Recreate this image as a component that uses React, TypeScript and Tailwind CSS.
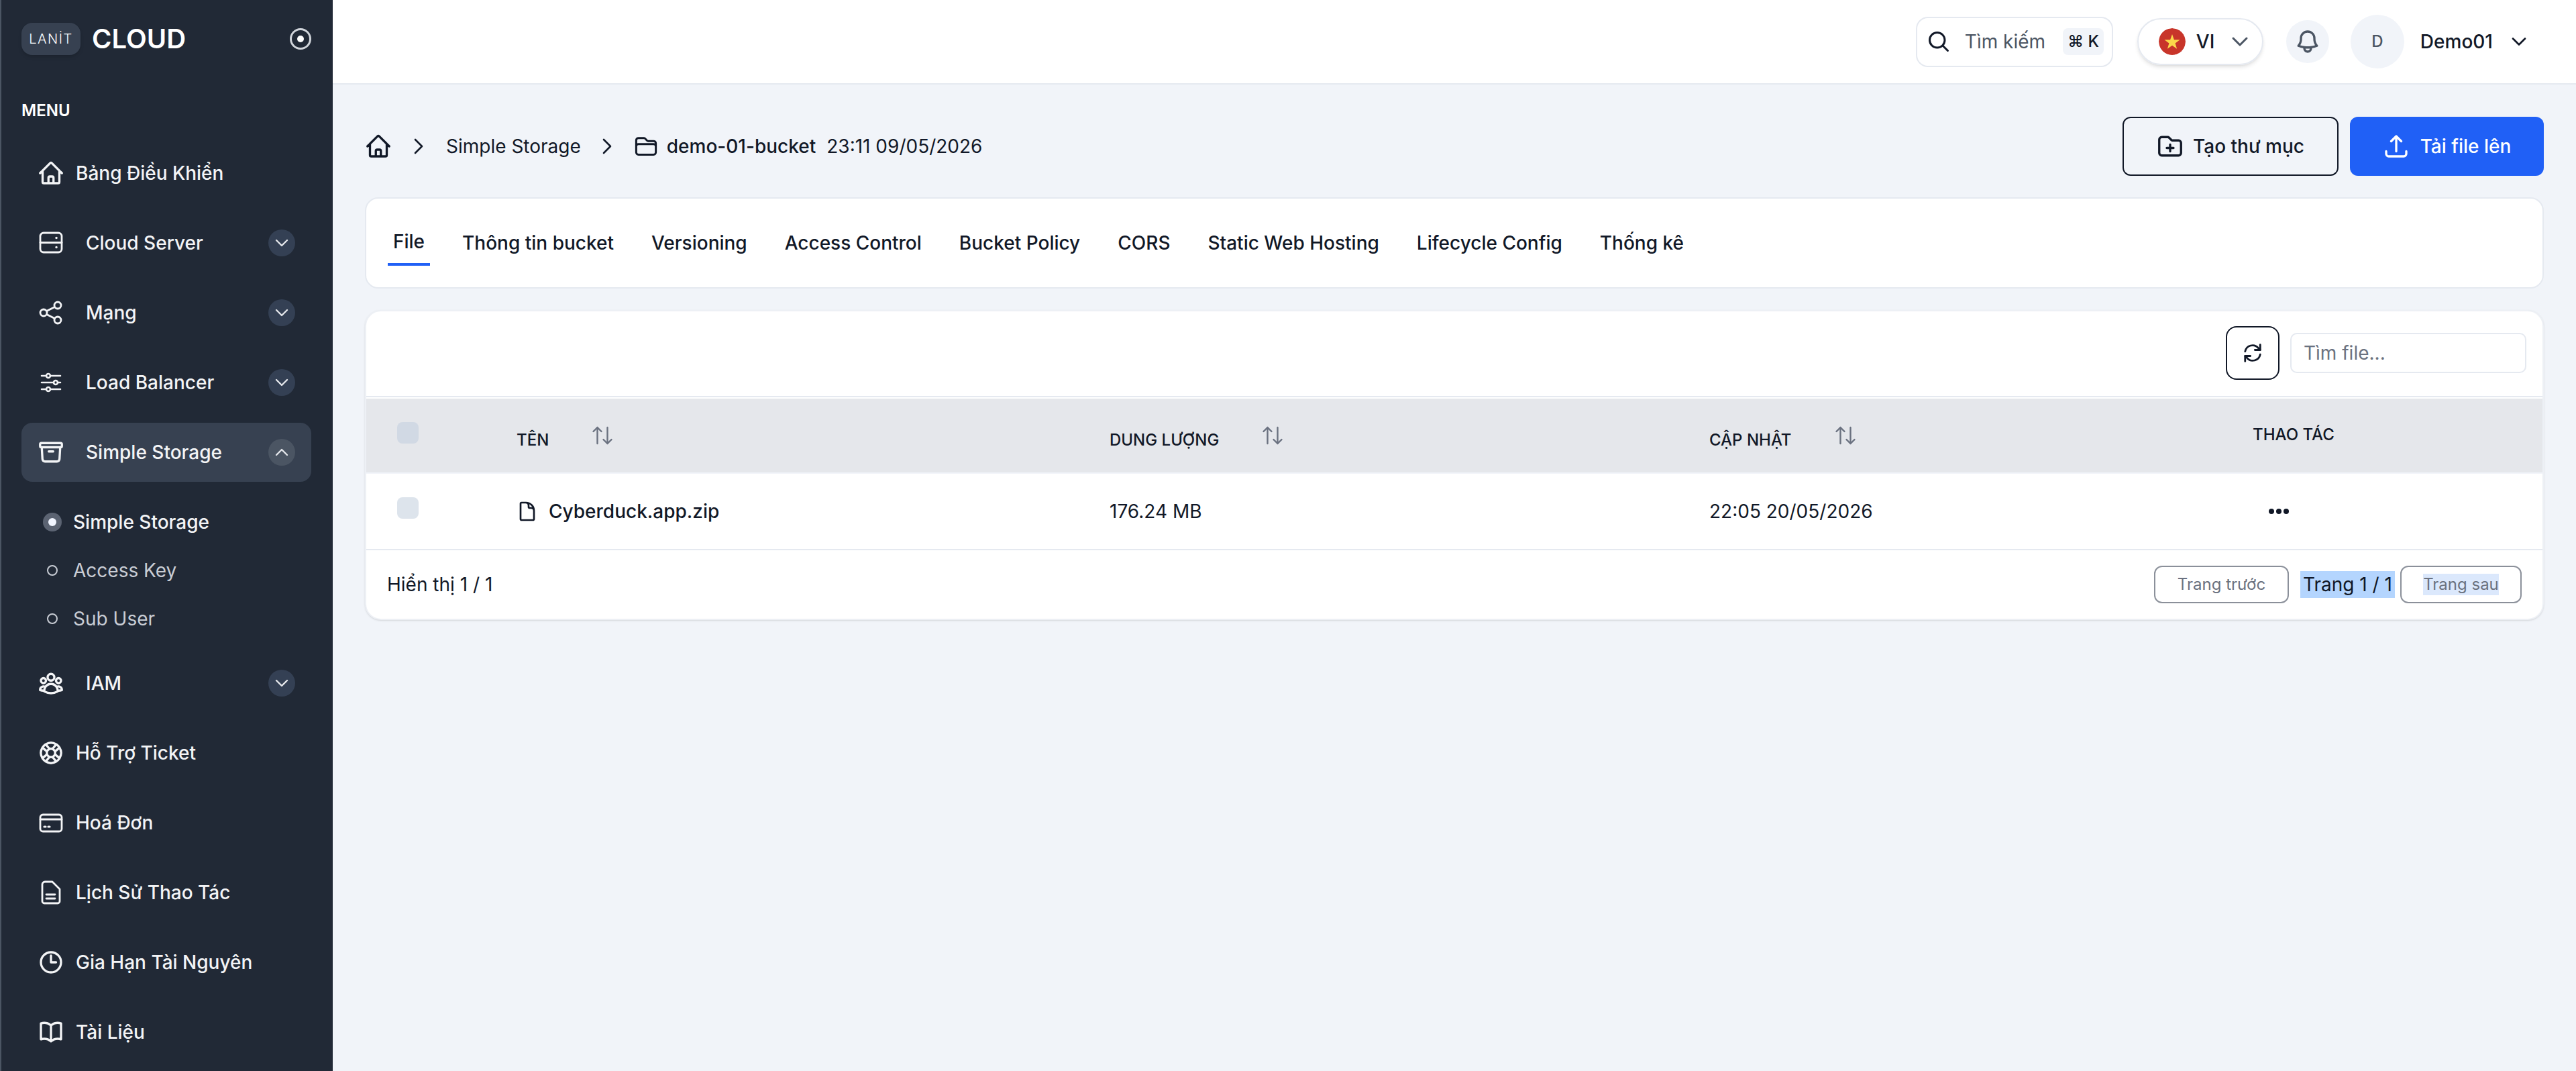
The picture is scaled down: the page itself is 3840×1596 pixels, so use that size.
import type { ReactNode } from 'react'
import { ArrowUpDown, ChevronDown, ChevronUp } from 'lucide-react'
import {
  HiOutlineArchiveBox,
  HiOutlineArrowUpTray,
  HiOutlineBell,
  HiOutlineBookOpen,
  HiOutlineClock,
  HiOutlineDocument,
  HiOutlineFolder,
  HiOutlineFolderPlus,
  HiOutlineHome,
  HiOutlineLifebuoy,
  HiOutlineMagnifyingGlass,
  HiOutlineUserGroup,
} from 'react-icons/hi2'

const iconClass = 'size-10 shrink-0'

function ServerIcon() {
  return (
    <svg viewBox="0 0 40 40" className={iconClass} fill="none" stroke="currentColor" strokeWidth="2.8" strokeLinecap="round">
      <rect x="4" y="5" width="32" height="29" rx="5" />
      <path d="M4 19.5h32" />
      <path d="M28 12.5h.1M28 26.5h.1" strokeWidth="3.4" />
    </svg>
  )
}

function ShareIcon() {
  return (
    <svg viewBox="0 0 40 40" className={iconClass} fill="none" stroke="currentColor" strokeWidth="2.8">
      <circle cx="9" cy="20" r="5" />
      <circle cx="30" cy="9" r="5" />
      <circle cx="30" cy="31" r="5" />
      <path d="M13.5 17.6 25.5 11.4M13.5 22.4 25.5 28.6" />
    </svg>
  )
}

function SlidersIcon() {
  return (
    <svg viewBox="0 0 40 40" className={iconClass} fill="none" stroke="currentColor" strokeWidth="2.6" strokeLinecap="round">
      <path d="M6 10h7M19 10h15M6 20h18M30 20h4M6 30h7M19 30h15" />
      <circle cx="16" cy="10" r="3" />
      <circle cx="27" cy="20" r="3" />
      <circle cx="16" cy="30" r="3" />
    </svg>
  )
}

function BillIcon() {
  return (
    <svg viewBox="0 0 40 40" className={iconClass} fill="none" stroke="currentColor" strokeWidth="2.8" strokeLinecap="round">
      <rect x="4" y="8" width="32" height="25" rx="4" />
      <path d="M4 15h32" />
      <path d="M10 26h2M16 26h2" strokeWidth="3.2" />
    </svg>
  )
}

function DocLinesIcon() {
  return (
    <svg viewBox="0 0 40 40" className={iconClass} fill="none" stroke="currentColor" strokeWidth="2.8" strokeLinecap="round" strokeLinejoin="round">
      <path d="M11 4h11l11 11v18a3 3 0 0 1-3 3H10a3 3 0 0 1-3-3V8a4 4 0 0 1 4-4Z" />
      <path d="M13 23h13M13 29h13" />
    </svg>
  )
}

function RefreshIcon() {
  return (
    <svg viewBox="0 0 32 32" className="size-9" fill="none" stroke="#111827" strokeWidth="2.5" strokeLinecap="round" strokeLinejoin="round">
      <path d="M6 14a10 10 0 0 1 17.5-4.5L26 12" />
      <path d="M26 5v7h-7" />
      <path d="M26 18a10 10 0 0 1-17.5 4.5L6 20" />
      <path d="M6 27v-7h7" />
    </svg>
  )
}

function CrumbChevron() {
  return (
    <svg viewBox="0 0 16 24" className="h-6 w-4 shrink-0" fill="none" stroke="currentColor" strokeWidth="2.6" strokeLinecap="round" strokeLinejoin="round">
      <path d="M3 2l10 10-10 10" />
    </svg>
  )
}

function Flag() {
  return (
    <svg viewBox="0 0 40 40" className="size-10 shrink-0 rounded-full">
      <circle cx="20" cy="20" r="20" fill="#c8352a" />
      <path d="M20 9l2.9 8.2h8.6l-6.9 5.2 2.5 8.4-7.1-5-7.1 5 2.5-8.4-6.9-5.2h8.6z" fill="#fbd84a" />
    </svg>
  )
}

type NavItem = { label: string; icon: ReactNode; expandable?: boolean }

const hi = { className: iconClass, strokeWidth: 2 }

const topItems: NavItem[] = [
  { label: 'Bảng Điều Khiển', icon: <HiOutlineHome {...hi} /> },
  { label: 'Cloud Server', icon: <ServerIcon />, expandable: true },
  { label: 'Mạng', icon: <ShareIcon />, expandable: true },
  { label: 'Load Balancer', icon: <SlidersIcon />, expandable: true },
]

const bottomItems: NavItem[] = [
  { label: 'IAM', icon: <HiOutlineUserGroup {...hi} />, expandable: true },
  { label: 'Hỗ Trợ Ticket', icon: <HiOutlineLifebuoy {...hi} /> },
  { label: 'Hoá Đơn', icon: <BillIcon /> },
  { label: 'Lịch Sử Thao Tác', icon: <DocLinesIcon /> },
  { label: 'Gia Hạn Tài Nguyên', icon: <HiOutlineClock {...hi} /> },
  { label: 'Tài Liệu', icon: <HiOutlineBookOpen {...hi} /> },
]

const tabs = ['Thông tin bucket', 'Versioning', 'Access Control', 'Bucket Policy', 'CORS', 'Static Web Hosting', 'Lifecycle Config', 'Thống kê']

function NavRow({ item }: { item: NavItem }) {
  return (
    <div className={`flex h-[88px] shrink-0 items-center rounded-2xl pl-6 pr-6 text-[#f3f4f6] ${item.expandable ? 'gap-8' : 'gap-[17px]'}`}>
      {item.icon}
      <span className="flex-1 text-[28px] font-medium">{item.label}</span>
      {item.expandable && (
        <span className="flex size-10 items-center justify-center rounded-full bg-[#344054]">
          <ChevronDown className="size-8 text-[#e5e7eb]" strokeWidth={1.8} />
        </span>
      )}
    </div>
  )
}

function Sidebar() {
  return (
    <aside className="flex h-full w-[496px] shrink-0 flex-col overflow-hidden border-l-2 border-[#4b5563] bg-[#212936]">
      <div className="ml-[30px] mr-8 mt-[34px] flex h-12 shrink-0 items-center">
        <div className="flex h-12 w-[88px] items-center justify-center rounded-2xl bg-[#374151] text-[20px] font-light tracking-[1.5px] text-white shadow-md">
          LANİT
        </div>
        <span className="ml-[17px] flex-1 text-[40px] font-semibold leading-none text-white">CLOUD</span>
        <span className="flex size-8 items-center justify-center rounded-full border-[3px] border-[#d1d5db]">
          <span className="size-[10px] rounded-full bg-white" />
        </span>
      </div>
      <div className="ml-[30px] mt-[67px] text-[24px] font-semibold leading-8 text-white">MENU</div>
      <nav className="ml-[30px] mr-8 mt-[33px] flex flex-col gap-4">
        {topItems.map(item => (
          <NavRow key={item.label} item={item} />
        ))}
        <div className="flex h-[88px] shrink-0 items-center gap-8 rounded-2xl bg-[#374151] pl-6 pr-6 text-[#f3f4f6]">
          <HiOutlineArchiveBox {...hi} />
          <span className="flex-1 text-[28px] font-medium">Simple Storage</span>
          <span className="flex size-10 items-center justify-center rounded-full bg-[#4b5563]">
            <ChevronUp className="size-8 text-[#e5e7eb]" strokeWidth={1.8} />
          </span>
        </div>
        <div className="mt-2 flex flex-col">
          <div className="flex h-[72px] items-center pl-[32px] text-[28px] font-medium text-[#f3f4f6]">
            <span className="flex size-7 items-center justify-center rounded-full bg-[#5b6372]">
              <span className="size-3 rounded-full bg-[#f1f5ff]" />
            </span>
            <span className="ml-[17px]">Simple Storage</span>
          </div>
          {['Access Key', 'Sub User'].map(label => (
            <div key={label} className="flex h-[72px] items-center pl-[38px] text-[28px] text-[#c9cdd5]">
              <span className="size-4 rounded-full border-2 border-[#c9cdd5]" />
              <span className="ml-[23px]">{label}</span>
            </div>
          ))}
        </div>
        {bottomItems.map(item => (
          <NavRow key={item.label} item={item} />
        ))}
      </nav>
    </aside>
  )
}

function TopBar() {
  return (
    <header className="flex h-[126px] shrink-0 items-center justify-end border-b-2 border-[#e5e9f0] bg-white pr-[67px]">
      <div className="flex h-[75px] w-[294px] items-center rounded-[18px] border-2 border-[#e5e9f0] pl-[14px]">
        <HiOutlineMagnifyingGlass className="size-9 shrink-0 text-[#111827]" strokeWidth={2} />
        <span className="ml-[21px] text-[28px] text-[#4b5563]">Tìm kiếm</span>
        <span className="ml-[26px] flex h-10 w-[61px] items-center justify-center rounded-lg bg-[#f1f4f9] text-[24px] font-medium text-[#111827]">
          ⌘ K
        </span>
      </div>
      <div className="ml-9 flex h-[70px] w-[188px] items-center rounded-full border-2 border-[#e5e9f0] pl-[30px] shadow-md">
        <Flag />
        <span className="ml-4 text-[28px] font-medium text-[#111827]">VI</span>
        <ChevronDown className="ml-[18px] size-10 text-[#4b5563]" strokeWidth={1.8} />
      </div>
      <div className="ml-[34px] flex size-16 items-center justify-center rounded-full bg-[#f1f4f9]">
        <HiOutlineBell className="size-10 text-[#4b5563]" strokeWidth={2} />
      </div>
      <div className="ml-8 flex size-20 items-center justify-center rounded-full bg-[#f1f4f9] text-[24px] font-medium text-[#4b5563]">D</div>
      <span className="ml-6 text-[28px] font-medium text-[#111827]">Demo01</span>
      <ChevronDown className="ml-[21px] size-9 text-[#111827]" strokeWidth={1.8} />
    </header>
  )
}

function PathBar() {
  return (
    <div className="flex h-[88px] items-center justify-between">
      <div className="flex items-center text-[28px] text-[#111827]">
        <HiOutlineHome className="size-10 text-[#111827]" strokeWidth={2} />
        <span className="ml-8">
          <CrumbChevron />
        </span>
        <span className="ml-[33px]">Simple Storage</span>
        <span className="ml-[31px]">
          <CrumbChevron />
        </span>
        <HiOutlineFolder className="ml-8 size-9" strokeWidth={2} />
        <span className="ml-[13px] font-medium">demo-01-bucket</span>
        <span className="ml-4">23:11 09/05/2026</span>
      </div>
      <div className="flex gap-[17px]">
        <button className="flex h-[88px] w-[322px] items-center justify-center gap-[14px] rounded-xl border-[2.5px] border-[#111827] text-[28px] font-medium text-[#111827]">
          <HiOutlineFolderPlus className="size-10" strokeWidth={2} />
          Tạo thư mục
        </button>
        <button className="flex h-[88px] w-[289px] items-center justify-center gap-[16px] rounded-xl bg-[#2060f6] text-[28px] font-medium text-white">
          <HiOutlineArrowUpTray className="size-10" strokeWidth={2} />
          Tải file lên
        </button>
      </div>
    </div>
  )
}

function TabBar() {
  return (
    <div className="mt-8 flex h-[136px] items-center gap-10 rounded-[20px] border-2 border-[#e5e9f0] bg-white pl-8 text-[28px] font-medium text-[#111827]">
      <div className="flex h-[68px] items-center border-b-4 border-[#2060f6] px-2">File</div>
      {tabs.map(tab => (
        <div key={tab} className="px-2">
          {tab}
        </div>
      ))}
    </div>
  )
}

function SortHead({ label }: { label: string }) {
  return (
    <div className="flex items-start">
      <span className="mt-[46px] text-[24px] font-medium leading-8 text-[#111827]">{label}</span>
      <ArrowUpDown className="ml-[62px] mt-[37px] size-9 text-[#6b7280]" strokeWidth={1.6} />
    </div>
  )
}

function FileTable() {
  const headCell = 'h-[112px] border-b-2 border-[#f1f4f9] bg-[#e5e7eb] pl-6 align-top font-normal'
  const bodyCell = 'h-[114px] border-b-2 border-[#e5e9f0] pl-6'
  return (
    <div className="mt-8 overflow-hidden rounded-3xl border-2 border-[#edf0f5] bg-white shadow-sm">
      <div className="flex h-[128px] items-start justify-end gap-4 border-b-2 border-[#e5e9f0] pr-[24px] pt-[22px]">
        <button className="flex h-20 w-20 items-center justify-center rounded-2xl border-[2.5px] border-[#111827]">
          <RefreshIcon />
        </button>
        <div className="mt-[10px] flex h-[60px] w-[352px] items-center rounded-[10px] border-2 border-[#e5e9f0] pl-[18px] text-[28px] text-[#6b7280]">
          Tìm file...
        </div>
      </div>
      <table className="mt-[2px] w-full table-fixed border-separate border-spacing-0">
        <colgroup>
          <col className="w-[200px]" />
          <col className="w-[884px]" />
          <col className="w-[894px]" />
          <col className="w-[810px]" />
          <col />
        </colgroup>
        <thead>
          <tr className="text-left">
            <th className={`${headCell} !pl-[46px]`}>
              <div className="mt-[35px] size-8 rounded-lg bg-[#d1d9e4]" />
            </th>
            <th className={headCell}>
              <SortHead label="TÊN" />
            </th>
            <th className={headCell}>
              <SortHead label="DUNG LƯỢNG" />
            </th>
            <th className={headCell}>
              <SortHead label="CẬP NHẬT" />
            </th>
            <th className={headCell}>
              <span className="mt-[38px] block text-[24px] font-medium leading-8 text-[#111827]">THAO TÁC</span>
            </th>
          </tr>
        </thead>
        <tbody>
          <tr className="text-[28px] text-[#111827]">
            <td className={`${bodyCell} !pl-[46px] align-top`}>
              <div className="mt-[35px] size-8 rounded-lg bg-[#dde4ec]" />
            </td>
            <td className={`${bodyCell} font-medium`}>
              <div className="flex items-center gap-4">
                <HiOutlineDocument className="size-8 shrink-0" strokeWidth={2} />
                Cyberduck.app.zip
              </div>
            </td>
            <td className={bodyCell}>176.24 MB</td>
            <td className={bodyCell}>22:05 20/05/2026</td>
            <td className={`${bodyCell} !pl-12`}>
              <div className="flex gap-[3px]">
                <span className="size-2 rounded-full bg-[#111827]" />
                <span className="size-2 rounded-full bg-[#111827]" />
                <span className="size-2 rounded-full bg-[#111827]" />
              </div>
            </td>
          </tr>
        </tbody>
      </table>
      <div className="flex h-[102px] items-center justify-between pl-[31px] pr-[31px] text-[28px] text-[#111827]">
        <span>Hiển thị 1 / 1</span>
        <div className="flex items-center">
          <button className="flex h-14 w-[201px] items-center justify-center rounded-xl border-2 border-[#8b909a] text-[24px] text-[#6b7280]">
            Trang trước
          </button>
          <span className="ml-[17px] flex h-10 w-[141px] items-center justify-center bg-[#b4d5fe]">Trang 1 / 1</span>
          <button className="ml-2 flex h-14 w-[181px] items-center justify-center rounded-xl border-2 border-[#8b909a] text-[24px] text-[#6b7280]">
            <span className="flex h-8 items-center bg-[#dbe8fc]">Trang sau</span>
          </button>
        </div>
      </div>
    </div>
  )
}

export default function App() {
  return (
    <div className="flex h-screen w-full overflow-hidden bg-[#f1f4f9] font-['Inter','Noto_Sans',sans-serif]">
      <Sidebar />
      <div className="flex min-w-0 flex-1 flex-col">
        <TopBar />
        <main className="px-12 pt-12">
          <PathBar />
          <TabBar />
          <FileTable />
        </main>
      </div>
    </div>
  )
}
